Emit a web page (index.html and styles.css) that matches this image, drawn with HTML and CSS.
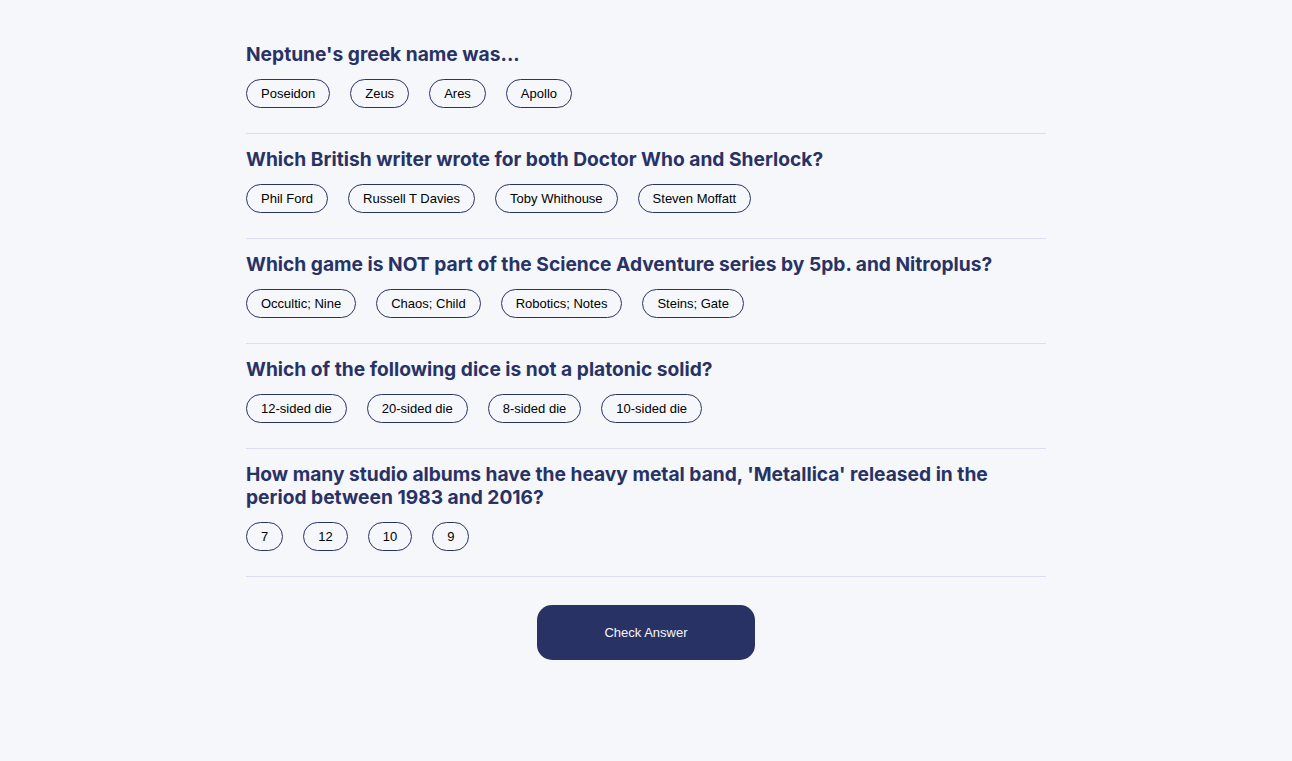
FILE: index.html
```html
<!DOCTYPE html>
<html lang="en">
<head>
<meta charset="utf-8">
<title>Quiz</title>
<link rel="stylesheet" href="styles.css">
</head>
<body>
<main class="quiz">
  <section class="question">
    <h2 class="title">Neptune's greek name was...</h2>
    <div class="answers">
      <button class="answer">Poseidon</button>
      <button class="answer">Zeus</button>
      <button class="answer">Ares</button>
      <button class="answer">Apollo</button>
    </div>
  </section>
  <section class="question">
    <h2 class="title">Which British writer wrote for both Doctor Who and Sherlock?</h2>
    <div class="answers">
      <button class="answer">Phil Ford</button>
      <button class="answer">Russell T Davies</button>
      <button class="answer">Toby Whithouse</button>
      <button class="answer">Steven Moffatt</button>
    </div>
  </section>
  <section class="question">
    <h2 class="title">Which game is NOT part of the Science Adventure series by 5pb. and Nitroplus?</h2>
    <div class="answers">
      <button class="answer">Occultic; Nine</button>
      <button class="answer">Chaos; Child</button>
      <button class="answer">Robotics; Notes</button>
      <button class="answer">Steins; Gate</button>
    </div>
  </section>
  <section class="question">
    <h2 class="title">Which of the following dice is not a platonic solid?</h2>
    <div class="answers">
      <button class="answer">12-sided die</button>
      <button class="answer">20-sided die</button>
      <button class="answer">8-sided die</button>
      <button class="answer">10-sided die</button>
    </div>
  </section>
  <section class="question">
    <h2 class="title">How many studio albums have the heavy metal band, 'Metallica' released in the period between 1983 and 2016?</h2>
    <div class="answers">
      <button class="answer">7</button>
      <button class="answer">12</button>
      <button class="answer">10</button>
      <button class="answer">9</button>
    </div>
  </section>
  <div class="actions">
    <button class="check">Check Answer</button>
  </div>
</main>
</body>
</html>
```
FILE: styles.css
```css
html, body {
  margin: 0;
  padding: 0;
  background: #f5f7fb;
}
body {
  font-family: "Liberation Sans", Arial, sans-serif;
  min-height: 761px;
}
.quiz {
  width: 800px;
  margin: 0 auto;
  padding-top: 42px;
}
.question {
  padding: 0 0 25px;
  margin-bottom: 13px;
  border-bottom: 1px solid #dbdef0;
}
.title {
  margin: 0 0 13px;
  padding-top: 1px;
  font-family: Inter, "Noto Sans", sans-serif;
  font-weight: 700;
  font-size: 19.2px;
  line-height: 1.2;
  color: #293264;
  font-feature-settings: "calt" 0;
}
.answers {
  display: flex;
  gap: 20px;
}
.answer {
  font-family: "Liberation Sans", Arial, sans-serif;
  font-size: 13px;
  color: #000;
  background: transparent;
  border: 1px solid #293264;
  border-radius: 15px;
  height: 29px;
  padding: 0 14px;
  line-height: 27px;
}
.actions {
  display: flex;
  justify-content: center;
  padding-top: 15px;
}
.check {
  width: 218px;
  height: 55px;
  border: none;
  border-radius: 15px;
  background: #293264;
  color: #f5f7fb;
  font-family: "Liberation Sans", Arial, sans-serif;
  font-size: 13px;
}
```
